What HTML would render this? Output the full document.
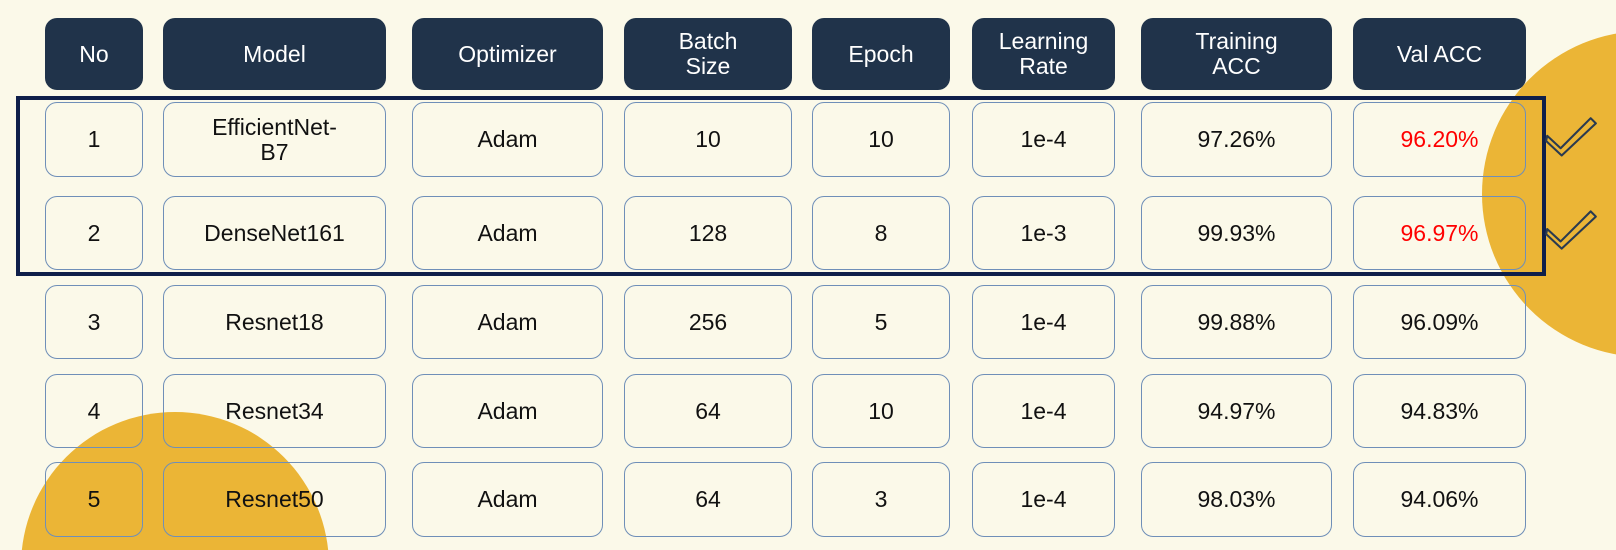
<!DOCTYPE html>
<html><head><meta charset="utf-8"><style>
html,body{margin:0;padding:0;width:1616px;height:550px;overflow:hidden;background:#fbf9e9;}
#s{position:relative;width:1616px;height:550px;overflow:hidden;font-family:"Liberation Sans",Arial,Helvetica,sans-serif;}
.b{position:absolute;box-sizing:border-box;display:flex;align-items:center;justify-content:center;text-align:center;font-family:"Liberation Sans",Arial,Helvetica,sans-serif;font-size:23px;line-height:25px;border-radius:12px;}
.h{background:#20334a;color:#fff;}
.d{border:1.5px solid #6f8fb8;color:#111;}
.r{color:#f00;}
#rect{position:absolute;left:16px;top:96px;width:1530px;height:180px;box-sizing:border-box;border:4px solid #0f1f4a;}
</style></head><body><div id="s">
<svg style="position:absolute;left:0;top:0" width="1616" height="550" viewBox="0 0 1616 550">
<circle cx="1645" cy="194" r="163" fill="#ebb536"/>
<circle cx="175" cy="566" r="154" fill="#ebb536"/>
</svg>
<div id="cells"></div>
<div id="rect"></div>
<svg style="position:absolute;left:1544px;top:113px" width="54" height="145" viewBox="0 0 52 140" fill="none" stroke="#2a3a50" stroke-width="2" stroke-linejoin="round">
<path d="M3 22 L16 34 L45 5 L50 10 L17 41 L2 27 Z"/>
<path d="M3 112 L16 124 L45 95 L50 100 L17 131 L2 117 Z"/>
</svg>
</div>
<script>
var sx=1616/1568, sy=550/534;
var cols=[[44,139],[158,375],[400,585],[605,768],[788,922],[943,1082],[1107,1292],[1313,1481]];
var rows=[[17,87],[99,172],[190,262],[277,349],[363,435],[449,521]];
var data=[["No","Model","Optimizer","Batch<br>Size","Epoch","Learning<br>Rate","Training<br>ACC","Val ACC"],
["1","EfficientNet-<br>B7","Adam","10","10","1e-4","97.26%","<span class=r>96.20%</span>"],
["2","DenseNet161","Adam","128","8","1e-3","99.93%","<span class=r>96.97%</span>"],
["3","Resnet18","Adam","256","5","1e-4","99.88%","96.09%"],
["4","Resnet34","Adam","64","10","1e-4","94.97%","94.83%"],
["5","Resnet50","Adam","64","3","1e-4","98.03%","94.06%"]];
var h="";
for(var i=0;i<6;i++)for(var j=0;j<8;j++){
var l=Math.round(cols[j][0]*sx),r=Math.round(cols[j][1]*sx),t=Math.round(rows[i][0]*sy),bt=Math.round(rows[i][1]*sy);
h+='<div class="b '+(i?'d':'h')+'" style="left:'+l+'px;top:'+t+'px;width:'+(r-l)+'px;height:'+(bt-t)+'px">'+data[i][j]+'</div>';}
document.getElementById('cells').innerHTML=h;
</script>
</body></html>
